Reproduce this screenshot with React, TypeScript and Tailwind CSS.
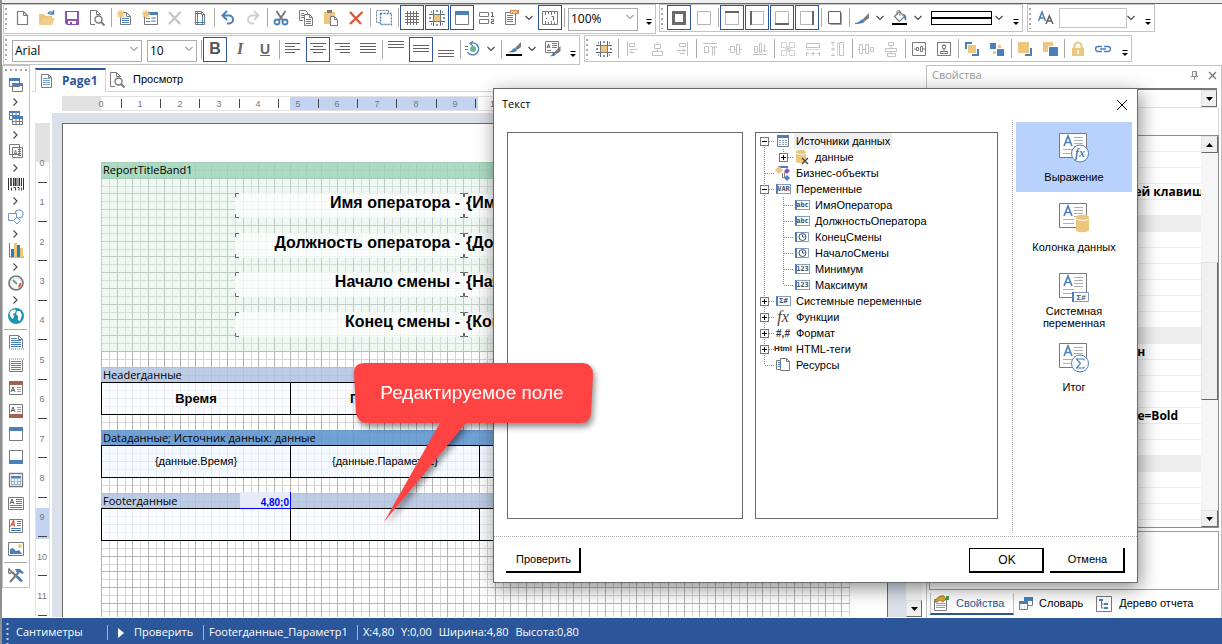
import type { ReactNode } from "react";

const GRAY = "#7a7a7a";
const DARK = "#626262";
const LIGHT = "#c2c2c2";
const BLUE = "#4a7fba";
const SAND = "#eec77f";

type Draw = { children?: ReactNode; w?: number; h?: number };

function Svg({ children, w = 16, h = 16 }: Draw) {
  return (
    <svg
      width={w}
      height={h}
      viewBox={`0 0 ${w} ${h}`}
      fill="none"
      className="shrink-0"
      aria-hidden="true"
    >
      {children}
    </svg>
  );
}

/* ---------- shared icon parts ---------- */

function Lines({ x1, x2, ys, color = BLUE }: { x1: number; x2: number; ys: number[]; color?: string }) {
  return <path d={ys.map((y) => `M${x1} ${y + 0.5}H${x2}`).join("")} stroke={color} />;
}

function Chevron() {
  return (
    <Svg w={8} h={6}>
      <path d="M0.5 1l3.5 3.5L7.5 1" stroke="#444" strokeWidth="1.1" />
    </Svg>
  );
}

const icons = {
  newFile: (
    <Svg>
      <path d="M3.5 1.5h6l4 4v9h-10z" stroke={GRAY} strokeWidth="1.2" />
      <path d="M9.5 1.5v4h4" stroke={GRAY} />
    </Svg>
  ),
  open: (
    <Svg>
      <path d="M0 15V4h5l1.5 2H13v3H4z" fill={SAND} />
      <path d="M4 8h12l-3 7H0z" fill="#f0cd8b" />
      <path d="M9 4c1-2.5 3.5-2.5 5-1M14.5 0v4h-4" stroke={BLUE} strokeWidth="1.3" />
    </Svg>
  ),
  save: (
    <Svg>
      <path d="M1 1h14v14H3l-2-2z" fill="#8a54b5" />
      <path d="M3 2h10v7H3z" fill="#fff" />
      <path d="M4 11h8v3H4z" fill="#fff" />
      <path d="M6 12h2v2H6z" fill="#8a54b5" />
    </Svg>
  ),
  preview: (
    <Svg>
      <path d="M6 14.5H1.5v-14h6l4 4V5M7.5 0.5v4h4" stroke={GRAY} />
      <circle cx="9.5" cy="9.5" r="3.5" stroke={GRAY} strokeWidth="1.4" />
      <path d="M12 12l3.5 3.5" stroke={GRAY} strokeWidth="2" />
    </Svg>
  ),
  newPage: (
    <Svg>
      <path d="M3.5 2.5h6l4 4v8h-10zM9.5 2.5v4h4" stroke={GRAY} />
      <Lines x1={5} x2={12} ys={[8, 10, 12]} />
      <path d="M4 0v8M0 4h8M1 1l6 6M7 1l-6 6" stroke={SAND} strokeWidth="1.5" />
    </Svg>
  ),
  newForm: (
    <Svg>
      <path d="M2.5 3.5h13v11h-13z" stroke={GRAY} />
      <path d="M2 2h14v3H2z" fill={BLUE} />
      <Lines x1={4} x2={8} ys={[8, 11]} color={GRAY} />
      <path d="M9.5 7.5h4v1h-4zM9.5 10.5h4v1h-4z" stroke="#9bb6d8" />
      <path d="M4 0v8M0 4h8M1 1l6 6M7 1l-6 6" stroke={SAND} strokeWidth="1.5" />
    </Svg>
  ),
  crossGray: (
    <Svg>
      <path d="M2 2l11 12M13.5 2L2 14" stroke="#c6c6c6" strokeWidth="2.4" />
    </Svg>
  ),
  crossRed: (
    <Svg>
      <path d="M2 2l11 12M14.5 2L2 14" stroke="#d9593a" strokeWidth="2.4" />
    </Svg>
  ),
  pageSetup: (
    <Svg>
      <path d="M3.5 1.5h6l3 3v10h-9zM9.5 1.5v3h3" stroke={GRAY} />
      <path d="M5.5 1v14M10.5 5v10M3 12.5h10M3 3.5h6" stroke={BLUE} />
    </Svg>
  ),
  undo: (
    <Svg>
      <path d="M3 5.5h6a4 4 0 0 1 0 8H7" stroke={BLUE} strokeWidth="2" />
      <path d="M7 1L2.5 5.5 7 10" stroke={BLUE} strokeWidth="2" />
    </Svg>
  ),
  redo: (
    <Svg>
      <path d="M13 5.5H7a4 4 0 0 0 0 8h2" stroke="#cfcfcf" strokeWidth="1.8" />
      <path d="M9 1l4.5 4.5L9 10" stroke="#cfcfcf" strokeWidth="1.8" />
    </Svg>
  ),
  cut: (
    <Svg>
      <path d="M3.5 1l6 9M12.5 1l-6 9" stroke={GRAY} strokeWidth="2" />
      <circle cx="4" cy="12" r="2.5" stroke={BLUE} strokeWidth="1.8" />
      <circle cx="12" cy="12" r="2.5" stroke={BLUE} strokeWidth="1.8" />
    </Svg>
  ),
  copy: (
    <Svg>
      <path d="M5 10.5H1.5v-10h6l2 2V4" stroke={GRAY} />
      <path d="M6.5 4.5h5l3 3v8h-8zM11.5 4.5v3h3" stroke={GRAY} fill="#fff" />
      <Lines x1={3} x2={6} ys={[3, 5, 7]} />
      <Lines x1={8} x2={13} ys={[9, 11, 13]} />
    </Svg>
  ),
  paste: (
    <Svg>
      <path d="M1 2h11v12H1z" fill={SAND} />
      <path d="M4 0h5v3H4z" fill={GRAY} />
      <path d="M7.5 6.5h4l3 3v6h-7zM11.5 6.5v3h3" stroke={GRAY} fill="#fff" />
    </Svg>
  ),
  selectAll: (
    <Svg>
      <path d="M0.5 0.5h12v12h-12z" stroke={GRAY} strokeDasharray="2 1" />
      <path d="M4.5 3.5h11v11h-11z" stroke={BLUE} strokeWidth="1.4" fill="#fff" strokeDasharray="2 1" />
    </Svg>
  ),
  grid: (
    <Svg>
      <path d="M3.5 1v14M6.5 1v14M9.5 1v14M12.5 1v14M1 3.5h14M1 6.5h14M1 9.5h14M1 12.5h14" stroke="#6e6e6e" />
    </Svg>
  ),
  snap: (
    <Svg>
      <path d="M4.5 0v16M11.5 0v16M0 4.5h16M0 11.5h16" stroke={DARK} />
      <path d="M7 1h2M7 15h2M1 7v2M15 7v2M2 2h1M13 2h1M2 14h1M13 14h1" stroke={BLUE} strokeWidth="1.6" />
      <path d="M4.5 4.5h7v7h-7z" fill={SAND} stroke={GRAY} />
    </Svg>
  ),
  formTop: (
    <Svg>
      <path d="M1.5 1.5h13v13h-13z" stroke={GRAY} />
      <path d="M1 1h14v4H1z" fill={BLUE} />
    </Svg>
  ),
  formBottom: (
    <Svg>
      <path d="M1.5 1.5h13v13h-13z" stroke={GRAY} />
      <path d="M1 11h14v4H1z" fill={BLUE} />
    </Svg>
  ),
  order: (
    <Svg>
      <path d="M0.5 2.5h9v4h-9zM0.5 9.5h9v4h-9z" stroke={GRAY} />
      <path d="M12 2.5h1.5v4M12 6.5h3M12 9.5h2.5v2h-2v2H15" stroke={DARK} />
    </Svg>
  ),
  report: (
    <Svg>
      <path d="M2.5 2.5h10v12h-10z" stroke={GRAY} />
      <path d="M7 0h9v4H7z" fill="#e58a45" />
      <path d="M8 3l1.5-2L11 3l1.5-2L14 3" stroke="#fff" />
      <Lines x1={4} x2={10} ys={[5, 7, 9, 11]} />
    </Svg>
  ),
  rulerToggle: (
    <Svg>
      <path d="M0.5 1.5h15v13h-15z" stroke={GRAY} />
      <path d="M3.5 2v3M6.5 2v2M9.5 2v3M12.5 2v2M3.5 14v-3M6.5 14v-2M9.5 14v-3M12.5 14v-2" stroke={GRAY} />
      <path d="M9.5 6.5h2v4M4 8.5h1" stroke={DARK} />
    </Svg>
  ),
  left: (
    <Svg>
      <Lines x1={0} x2={15} ys={[2, 8]} color={DARK} />
      <Lines x1={0} x2={10} ys={[5, 11]} color={DARK} />
    </Svg>
  ),
  center: (
    <Svg>
      <Lines x1={0} x2={16} ys={[2, 8]} color={DARK} />
      <Lines x1={3} x2={13} ys={[5, 11]} color={DARK} />
    </Svg>
  ),
  right: (
    <Svg>
      <Lines x1={0} x2={15} ys={[2, 8]} color={DARK} />
      <Lines x1={5} x2={15} ys={[5, 11]} color={DARK} />
    </Svg>
  ),
  justify: (
    <Svg>
      <Lines x1={0} x2={16} ys={[2, 5, 8, 11]} color={DARK} />
    </Svg>
  ),
  vTop: (
    <Svg>
      <Lines x1={0} x2={16} ys={[0, 3, 6]} color={DARK} />
    </Svg>
  ),
  vMiddle: (
    <Svg>
      <Lines x1={0} x2={16} ys={[4, 7, 10]} color={DARK} />
    </Svg>
  ),
  vBottom: (
    <Svg>
      <Lines x1={0} x2={16} ys={[9, 12, 15]} color={DARK} />
    </Svg>
  ),
  rotate: (
    <Svg>
      <path d="M5 2.5A6 6 0 1 1 2.5 11" stroke={BLUE} strokeWidth="1.4" />
      <path d="M8 0L5 2.5 8 5" stroke={BLUE} strokeWidth="1.3" />
      <path d="M0 5.5h3M0 8.5h3" stroke={GRAY} />
      <circle cx="8" cy="8" r="3" fill="#6db592" />
    </Svg>
  ),
  pen: (
    <Svg>
      <path d="M15 1v5l-4 3-2-2z" fill={GRAY} />
      <path d="M9 7l2 2c-1 2-4 3-9 2 3 0 4-3 7-4z" fill={BLUE} />
      <path d="M0 13h16v2H0z" fill="#000" />
    </Svg>
  ),
  brush: (
    <Svg>
      <path d="M15 3v5l-4 3-2-2z" fill={GRAY} />
      <path d="M9 9l2 2c-1 2-4 3-10 3v-1c4 0 5-3 8-4z" fill={BLUE} />
    </Svg>
  ),
  styles: (
    <Svg>
      <path d="M0.5 0.5h13v11h-13z" stroke={GRAY} fill="#fff" />
      <path d="M2 7l1.5-4L5 7M2.5 6h2" stroke={DARK} />
      <Lines x1={7} x2={12} ys={[2, 4, 6]} color={GRAY} />
      <Lines x1={2} x2={6} ys={[9]} color={GRAY} />
      <path d="M15.5 5v5l-4 3-2-2z" fill={GRAY} />
      <path d="M9 11l2 2c-1 2-3 2.5-6 2 2 0 2-3 4-4z" fill={BLUE} />
    </Svg>
  ),
  borderAll: (
    <Svg>
      <path d="M2.5 2.5h11v11h-11z" stroke="#6a6a6a" strokeWidth="3" />
    </Svg>
  ),
  borderNone: (
    <Svg>
      <path d="M1.5 1.5h13v13h-13z" stroke="#b5b5b5" />
    </Svg>
  ),
  borderTop: (
    <Svg>
      <path d="M1.5 1.5h13v13h-13z" stroke="#b5b5b5" />
      <path d="M1 2h14" stroke="#666" strokeWidth="2" />
    </Svg>
  ),
  borderLeft: (
    <Svg>
      <path d="M1.5 1.5h13v13h-13z" stroke="#b5b5b5" />
      <path d="M2 1v14" stroke="#666" strokeWidth="2" />
    </Svg>
  ),
  borderBottom: (
    <Svg>
      <path d="M1.5 1.5h13v13h-13z" stroke="#b5b5b5" />
      <path d="M1 14h14" stroke="#666" strokeWidth="2" />
    </Svg>
  ),
  borderRight: (
    <Svg>
      <path d="M1.5 1.5h13v13h-13z" stroke="#b5b5b5" />
      <path d="M14 1v14" stroke="#666" strokeWidth="2" />
    </Svg>
  ),
  shadow: (
    <Svg>
      <path d="M3 3h12v12H3z" fill="#a5a5a5" />
      <path d="M1.5 1.5h12v12h-12z" stroke={DARK} fill="#fff" />
    </Svg>
  ),
  bucket: (
    <Svg>
      <path d="M2.5 6.5l5-5 5 5-5 5z" stroke={GRAY} strokeWidth="1.2" />
      <path d="M5 5V1.5C5 0 8 0 8 1.5V6" stroke={GRAY} />
      <path d="M11 4c3 0 4 3 3 7-1-1-2-2-2-5z" fill={BLUE} />
      <path d="M0 13h15v2H0z" fill="#000" />
    </Svg>
  ),
  fontSize: (
    <Svg>
      <path d="M0.5 11L4 2l3.5 9M1.8 8h4.5" stroke={BLUE} strokeWidth="1.5" />
      <path d="M8 14l3.3-8 3.7 8M9.2 11h4.5" stroke={DARK} strokeWidth="1.6" />
    </Svg>
  ),
  alLeft: (
    <Svg>
      <path d="M3.5 1v14M5.5 2.5h5v3h-5zM5.5 8.5h8M5.5 11.5h5M8 8.5l-2 2 2 2" stroke={LIGHT} />
    </Svg>
  ),
  alCenter: (
    <Svg>
      <path d="M8.5 1v2M5.5 3.5h6v4h-6zM8.5 8v2M3.5 10.5h10v4h-10z" stroke={LIGHT} />
    </Svg>
  ),
  alRight: (
    <Svg>
      <path d="M13.5 1v14M5.5 2.5h6v3h-6zM3 9.5h9M6 12.5h5M9 7.5l2 2-2 2" stroke={LIGHT} />
    </Svg>
  ),
  alTop: (
    <Svg>
      <path d="M1 2.5h14M2.5 5.5h4v6h-4zM8.5 5.5h2v9M12.5 14V5M11 7l2-2 2 2" stroke={LIGHT} />
    </Svg>
  ),
  alMiddle: (
    <Svg>
      <path d="M1 8.5h2M3.5 5.5h4v6h-4zM8 8.5h2M9.5 3.5h3v10h-3zM13 8.5h2" stroke={LIGHT} />
    </Svg>
  ),
  alBottom: (
    <Svg>
      <path d="M1 13.5h14M2.5 5.5h3v6h-3zM7.5 2.5h2v9h-2zM12.5 3v8M11 9l2 2 2-2" stroke={LIGHT} />
    </Svg>
  ),
  sameSize: (
    <Svg>
      <path d="M1.5 1.5h5v5h-5zM9.5 1.5h5v5h-5zM1.5 9.5h5v5h-5zM9.5 9.5h5v5h-5z" stroke={LIGHT} strokeDasharray="2 1" />
      <path d="M8 5v6M5 8h6" stroke={LIGHT} />
    </Svg>
  ),
  sameWidth: (
    <Svg>
      <path d="M1.5 2.5h13v4h-13z" stroke={LIGHT} />
      <path d="M1.5 8.5h13" stroke={LIGHT} strokeDasharray="2 1" />
      <path d="M1 12.5h3M6 12.5h4M12 12.5h3M1.5 11v4M8 11v4M14.5 11v4" stroke={LIGHT} />
    </Svg>
  ),
  sameHeight: (
    <Svg>
      <path d="M9.5 1.5h4v13h-4z" stroke={LIGHT} />
      <path d="M7.5 1.5v13" stroke={LIGHT} strokeDasharray="2 1" />
      <path d="M1 1.5h4M1 8h4M1 14.5h4M3 2v3M3 7v3M3 12v3" stroke={LIGHT} />
    </Svg>
  ),
  spaceH: (
    <Svg>
      <path d="M0 8.5h1M1.5 3.5h3v9h-3zM5 8.5h2M7.5 3.5h3v9h-3zM12.5 6.5h3v4h-3z" stroke={LIGHT} />
    </Svg>
  ),
  spaceV: (
    <Svg>
      <path d="M5.5 1.5h5v3h-5zM8 5v2M2.5 7.5h11v3h-11zM8 11v1M4.5 12.5h8v3h-8z" stroke={LIGHT} />
    </Svg>
  ),
  centerH: (
    <Svg>
      <path d="M1.5 1.5h13v13h-13zM3 8h2M5.5 6.5h2v3h-2zM9.5 5.5h2v5h-2zM12 8h2" stroke={GRAY} />
    </Svg>
  ),
  centerV: (
    <Svg>
      <path d="M1.5 1.5h13v13h-13zM8 3v1M6.5 4.5h3v3h-3zM8 8v2M4.5 10.5h7v2h-7z" stroke={GRAY} />
    </Svg>
  ),
  toFront: (
    <Svg>
      <path d="M1 1h7v2H3v5H1zM15 15H8v-2h5V8h2z" fill={BLUE} />
      <path d="M4 4h8v8H4z" fill={SAND} />
    </Svg>
  ),
  toBack: (
    <Svg>
      <path d="M1 2h6v6H1zM8 8h7v7H8z" fill={BLUE} />
      <path d="M9 4h3v3H9zM4 10h3v3H4z" fill={SAND} />
    </Svg>
  ),
  forward: (
    <Svg>
      <path d="M15 15H8v-2h5V7h2z" fill={BLUE} />
      <path d="M1 1h11v11H1z" fill={SAND} />
    </Svg>
  ),
  backward: (
    <Svg>
      <path d="M1 1h10v4H6v6H1z" fill={SAND} />
      <path d="M7 6h9v9H7z" fill={BLUE} />
    </Svg>
  ),
  lock: (
    <Svg>
      <path d="M2 7h12v8H2z" fill={SAND} />
      <path d="M4.5 7V5a3.5 3.5 0 0 1 7 0v2" stroke={SAND} strokeWidth="2" />
      <path d="M8 9v4" stroke="#fff" strokeWidth="1.5" />
    </Svg>
  ),
  link: (
    <Svg>
      <path d="M7 5.5H3a2.5 2.5 0 0 0 0 5h4M9 5.5h4a2.5 2.5 0 0 1 0 5H9M5 8h6" stroke={BLUE} strokeWidth="1.5" />
    </Svg>
  ),
  // component palette
  bands: (
    <Svg>
      <path d="M1.5 1.5h10v8h-10zM4.5 6.5h10v8h-10z" stroke={GRAY} fill="#fff" />
      <path d="M1 1h11v3H1zM4 6h11v3H4z" fill={BLUE} />
    </Svg>
  ),
  crossBands: (
    <Svg>
      <path d="M1.5 1.5h10v8h-10z" stroke={GRAY} fill="#fff" />
      <path d="M1 5.5h10M4.5 3v6M8 3v6" stroke={GRAY} />
      <path d="M4.5 6.5h10v8h-10z" stroke={GRAY} fill="#fff" />
      <path d="M5 11.5h10M8 9v6M11.5 9v6" stroke={GRAY} />
      <path d="M1 1h11v2H1zM4 6h11v3H4z" fill={BLUE} />
    </Svg>
  ),
  components: (
    <Svg>
      <path d="M1.5 1.5h10v10h-10zM4.5 4.5h10v10h-10z" stroke={GRAY} fill="#fff" />
      <path d="M6 12l1.5-5L9 12M6.5 10.5h2" stroke={GRAY} />
      <Lines x1={10} x2={13} ys={[6, 8, 10, 12]} />
    </Svg>
  ),
  barcode: (
    <Svg>
      <path d="M0.5 2v12M15.5 2v12M5.5 2v8M9 2v8M13.5 2v8" stroke="#333" />
      <path d="M3 2v8M7.3 2v8M11.3 2v8" stroke="#333" strokeWidth="1.6" />
      <path d="M3.5 11.500v3M5.5 11.5h2v3M9.500 11.500H11v3M13.500 11.500v3" stroke="#444" />
    </Svg>
  ),
  shapes: (
    <Svg>
      <circle cx="11" cy="5" r="4" stroke="#6f96c8" strokeWidth="1.2" />
      <path d="M0.5 4.5h8v7h-8z" stroke="#6f96c8" fill="#fff" />
      <path d="M9 8l3.5 3.5L9 15l-3.5-3.5z" stroke="#6f96c8" fill="#fff" />
    </Svg>
  ),
  chart: (
    <Svg>
      <path d="M1.5 1v14h15" stroke={GRAY} />
      <path d="M3 7h3v8H3zM9 3h3v12H9z" fill="#1d83bb" />
      <path d="M6 1h3v14H6zM12 6h3v9h-3z" fill="#f4c273" />
    </Svg>
  ),
  gauge: (
    <Svg>
      <circle cx="8" cy="8" r="7" stroke={GRAY} strokeWidth="1.7" />
      <circle cx="8" cy="8" r="5" stroke="#bbb" strokeDasharray="1 1.5" />
      <path d="M12.5 8a5 5 0 0 1-2 4" stroke="#d9593a" strokeWidth="2" />
      <path d="M9 9L5 5" stroke="#5ba583" strokeWidth="1.8" />
    </Svg>
  ),
  map: (
    <Svg>
      <circle cx="8" cy="8" r="8" fill="#1e93ad" />
      <path d="M2 4c2-3 5-3 6-2l-1 3-2 1 1 2-1 3c-2-1-4-4-3-7zM9 3l3 0 2 4-2 6-2-1V8L8 6z" fill="#fff" />
    </Svg>
  ),
  reportTitle: (
    <Svg>
      <path d="M1.5 14V1.500h9l4 4V14M10.5 1.500v4h4" stroke={GRAY} />
      <path d="M1 15h15" stroke={GRAY} strokeDasharray="1 1" />
      <Lines x1={3} x2={9} ys={[4]} />
      <Lines x1={3} x2={13} ys={[6, 8, 10, 12]} />
    </Svg>
  ),
  reportSummary: (
    <Svg>
      <path d="M1.5 3v11.5h13V3" stroke={GRAY} />
      <path d="M1 2h15" stroke={GRAY} strokeDasharray="1 1" />
      <Lines x1={3} x2={13} ys={[4, 6, 8, 10, 12]} />
    </Svg>
  ),
  pageHeader: (
    <Svg>
      <path d="M1.5 1.5h13v13h-13z" stroke={GRAY} />
      <path d="M1 1h14v4H1z" fill="#a3614f" />
      <path d="M3 12l2-5 2 5M3.5 10.5h3" stroke={DARK} />
      <Lines x1={9} x2={13} ys={[7, 9, 11]} color="#cf9184" />
    </Svg>
  ),
  pageFooter: (
    <Svg>
      <path d="M1.5 1.5h13v13h-13z" stroke={GRAY} />
      <path d="M1 11h14v4H1z" fill="#a3614f" />
      <path d="M3 9l2-5 2 5M3.5 7.5h3" stroke={DARK} />
      <Lines x1={9} x2={13} ys={[4, 6, 8]} color="#cf9184" />
    </Svg>
  ),
  dataBand: (
    <Svg>
      <path d="M1.5 1.5h13v13h-13z" stroke={GRAY} strokeWidth="1.3" />
      <path d="M3 4h10v2H3z" fill={BLUE} />
      <path d="M3.5 6.5h9v6h-9zM3 9.5h10M6.5 7v6M9.5 7v6" stroke="#9fb4d0" />
    </Svg>
  ),
  text: (
    <Svg>
      <path d="M0.5 2.5h15v12h-15z" stroke={GRAY} />
      <path d="M2 9l2-5 2 5M2.5 7.5h3" stroke={DARK} />
      <Lines x1={8} x2={14} ys={[4, 6, 8]} />
      <Lines x1={2} x2={14} ys={[10, 12]} />
    </Svg>
  ),
  richText: (
    <Svg>
      <path d="M1.5 1.5h13v13h-13z" stroke={GRAY} />
      <path d="M2.5 8.5l3-6 1 6M3.5 6.5h3" stroke="#d9593a" strokeWidth="1.3" />
      <Lines x1={9} x2={13} ys={[3, 5, 7]} />
      <Lines x1={3} x2={13} ys={[10, 12]} />
    </Svg>
  ),
  image: (
    <Svg>
      <path d="M0.5 1.5h15v13h-15z" stroke={GRAY} />
      <circle cx="12" cy="5" r="2" fill={SAND} />
      <path d="M2 13V8l3-1 3 3 3-1 3 4z" fill={BLUE} />
    </Svg>
  ),
  tools: (
    <Svg>
      <path d="M2 15l9-10" stroke={GRAY} strokeWidth="2" />
      <path d="M7 2h5l4 4-2 1-3-2-2 1z" fill={BLUE} />
      <path d="M4 5l9 9" stroke={GRAY} strokeWidth="2.4" />
      <path d="M9 9l5 5.5" stroke={BLUE} strokeWidth="2.4" />
      <path d="M1 2l3 3-2 1.5L0 5z" stroke={GRAY} strokeWidth="1.5" />
    </Svg>
  ),
  // tabs
  pageTab: (
    <Svg>
      <path d="M1.5 1.5h7l3 3v10h-10zM8.5 1.5v3h3" stroke={GRAY} />
      <Lines x1={3} x2={10} ys={[5, 7, 9, 11]} color="#7da4cf" />
    </Svg>
  ),
  properties: (
    <Svg>
      <path d="M1.5 4.5h12v11h-12z" stroke={GRAY} fill="#fff" />
      <Lines x1={3} x2={12} ys={[8, 10, 12]} color="#7da4cf" />
      <path d="M2 7c1-4 5-7 9-6l2 3-3 3-3-2-3 2z" fill="#dba63c" stroke="#8d6b26" strokeWidth="0.8" />
      <path d="M13 1h3v4h-3z" fill="#4aa04f" />
    </Svg>
  ),
  dictionary: (
    <Svg>
      <path d="M6.5 2.5h8v7h-8z" stroke={GRAY} fill="#fff" />
      <path d="M1.5 6.5h8v7h-8z" stroke={GRAY} fill="#fff" />
      <path d="M6 1h9v4H6zM1 5h9v3H1z" fill={BLUE} />
      <path d="M3 10h1M6 10h1M3 12h1M6 12h1" stroke={LIGHT} />
    </Svg>
  ),
  reportTree: (
    <Svg>
      <path d="M0.5 0.5h15v15h-15z" stroke={GRAY} />
      <path d="M3 3h4v2H3zM8 7h4v2H8zM8 11h4v2H8z" fill={BLUE} />
      <path d="M5.5 5v7h2M5.5 8h2" stroke={BLUE} />
    </Svg>
  ),
  // tree
  table: (
    <Svg>
      <path d="M2.5 2.5h11v11h-11z" stroke={GRAY} />
      <path d="M2 2h12v3H2z" fill={BLUE} />
      <path d="M4 7.5h8M4 9.5h8M4 11.5h8" stroke="#8aa4c8" strokeDasharray="2 1" />
    </Svg>
  ),
  dbOff: (
    <Svg>
      <path d="M2 3c0-3 10-3 10 0v9c0 3-10 3-10 0z" fill={SAND} />
      <path d="M2 4c1 2 9 2 10 0" stroke="#fff" />
      <path d="M8 9l6 6M14 9l-6 6" stroke="#444" strokeWidth="1.4" />
    </Svg>
  ),
  business: (
    <Svg>
      <path d="M3 2h10" stroke={BLUE} strokeWidth="2" />
      <path d="M7.5 8v4.5h3M9.5 12V7.5h3" stroke={GRAY} />
      <path d="M4 1l4 4-4 4-4-4z" fill={SAND} />
      <path d="M12 3l3 3-3 3-3-3z" fill="#8a54b5" />
      <path d="M12 10l3 3-3 3-3-3z" fill={BLUE} />
    </Svg>
  ),
  clock: (
    <Svg>
      <path d="M1.5 3.5h13v9h-13z" stroke="#7f9cc5" />
      <path d="M1 3h2v10H1z" fill={BLUE} />
      <circle cx="8.5" cy="8" r="3.5" stroke="#44546a" />
      <path d="M8.5 5.5V8h2" stroke="#44546a" />
    </Svg>
  ),
  resources: (
    <Svg>
      <path d="M5.5 12.5h-4v-9h4M5.5 1.5h6l3 3v9h-9zM11.5 1.5v3h3" stroke={GRAY} />
      <Lines x1={3} x2={6} ys={[5, 7, 9]} />
    </Svg>
  ),
};

type IconName = keyof typeof icons;

/* ---------- toolbar parts ---------- */

function ToolButton({ icon, label, active }: { icon: ReactNode; label: string; active?: boolean }) {
  return (
    <button
      type="button"
      aria-label={label}
      aria-pressed={active}
      className={
        "mr-px flex h-[25px] w-6 shrink-0 items-center justify-center " +
        (active ? "border border-[#2b579a]" : "")
      }
    >
      {icon}
    </button>
  );
}

function SplitButton({ icon, label }: { icon: IconName; label: string }) {
  return (
    <button type="button" aria-label={label} className="mr-[2px] flex h-[25px] shrink-0 items-center">
      <span className="flex w-[22px] justify-center">{icons[icon]}</span>
      <span className="flex w-[14px] justify-center">
        <Chevron />
      </span>
    </button>
  );
}

function Divider() {
  return <div className="mx-px h-[19px] w-px shrink-0 bg-[#a9a9a9]" />;
}

function Grip() {
  return (
    <Svg w={6} h={22}>
      <path d="M2 1v21" stroke="#a8a8a8" strokeWidth="2" strokeDasharray="2 3" />
    </Svg>
  );
}

function More() {
  return (
    <button type="button" aria-label="Еще" className="flex w-[12px] shrink-0 self-end justify-center pb-[5px]">
      <Svg w={6} h={6}>
        <path d="M0.5 0.5h5" stroke="#000" />
        <path d="M0 3h6L3 6z" fill="#000" />
      </Svg>
    </button>
  );
}

function Combo({ label, value, className }: { label: string; value: string; className: string }) {
  return (
    <div className={"relative shrink-0 " + className}>
      <select
        aria-label={label}
        className="h-full w-full appearance-none border border-[#ababab] bg-white pl-[2px] font-['Open_Sans',sans-serif] text-xs leading-none"
      >
        <option>{value}</option>
      </select>
      <span className="pointer-events-none absolute top-2 right-1 opacity-50">
        <Chevron />
      </span>
    </div>
  );
}

function ToolbarBox({ children, className }: { children: ReactNode; className: string }) {
  return (
    <div role="toolbar" className={"flex items-center border border-[#c3c3c3] bg-white " + className}>
      <Grip />
      {children}
    </div>
  );
}

type Item = [IconName, string, boolean?] | "|";

function Items({ items }: { items: Item[] }) {
  return items.map((item, i) =>
    item === "|" ? (
      <Divider key={i} />
    ) : (
      <ToolButton key={i} icon={icons[item[0]]} label={item[1]} active={item[2]} />
    ),
  );
}

const fileItems: Item[] = [
  ["newFile", "Новый"],
  ["open", "Открыть"],
  ["save", "Сохранить"],
  ["preview", "Предпросмотр"],
  "|",
  ["newPage", "Новая страница"],
  ["newForm", "Новая форма"],
  ["crossGray", "Удалить страницу"],
  ["pageSetup", "Параметры страницы"],
  "|",
  ["undo", "Отменить"],
  ["redo", "Вернуть"],
  "|",
  ["cut", "Вырезать"],
  ["copy", "Копировать"],
  ["paste", "Вставить"],
  ["crossRed", "Удалить"],
  "|",
  ["selectAll", "Выделить все"],
  "|",
  ["grid", "Сетка", true],
  ["snap", "Привязка", true],
  ["formTop", "Заголовки", true],
  ["order", "Порядок"],
];

const borderItems: Item[] = [
  ["borderAll", "Все границы", true],
  ["borderNone", "Без границ"],
  "|",
  ["borderTop", "Верхняя граница", true],
  ["borderLeft", "Левая граница", true],
  ["borderBottom", "Нижняя граница", true],
  ["borderRight", "Правая граница", true],
  "|",
  ["shadow", "Тень"],
  "|",
];

const alignItems: Item[] = [
  "|",
  ["left", "По левому краю"],
  ["center", "По центру", true],
  ["right", "По правому краю"],
  ["justify", "По ширине"],
  "|",
  ["vTop", "По верху"],
  ["vMiddle", "По середине", true],
  ["vBottom", "По низу"],
  "|",
];

const layoutItems: Item[] = [
  ["snap", "Выровнять по сетке"],
  "|",
  ["alLeft", "Выровнять влево"],
  ["alCenter", "Выровнять по центру"],
  ["alRight", "Выровнять вправо"],
  "|",
  ["alTop", "Выровнять вверх"],
  ["alMiddle", "Выровнять по середине"],
  ["alBottom", "Выровнять вниз"],
  "|",
  ["sameSize", "Одинаковый размер"],
  ["sameWidth", "Одинаковая ширина"],
  ["sameHeight", "Одинаковая высота"],
  "|",
  ["spaceH", "Интервал по горизонтали"],
  ["spaceV", "Интервал по вертикали"],
  "|",
  ["centerH", "Центр по горизонтали"],
  ["centerV", "Центр по вертикали"],
  "|",
  ["toFront", "На передний план"],
  ["toBack", "На задний план"],
  "|",
  ["forward", "Вперед"],
  ["backward", "Назад"],
  "|",
  ["lock", "Заблокировать"],
  ["link", "Связать"],
];

function Toolbars() {
  return (
    <div className="flex shrink-0 flex-col gap-px pl-px">
      <div className="flex h-[30px] items-start">
        <ToolbarBox className="h-[30px] pb-[3px]">
          <Items items={fileItems} />
          <SplitButton icon="report" label="Отчет" />
          <ToolButton icon={icons.rulerToggle} label="Линейки" active />
          <Divider />
          <Combo label="Масштаб" value="100%" className="mr-[5px] ml-[2px] h-[23px] w-[70px]" />
          <More />
        </ToolbarBox>
        <ToolbarBox className="ml-[3px] h-[28px] pb-px">
          <span className="w-px" />
          <Items items={borderItems} />
          <SplitButton icon="brush" label="Цвет границы" />
          <SplitButton icon="bucket" label="Заливка" />
          <button type="button" aria-label="Стиль границы" className="mr-1 ml-1 flex items-center">
            <span className="flex h-[14px] w-[61px] items-center border border-black">
              <span className="h-[2px] w-full bg-black" />
            </span>
            <span className="flex w-[14px] justify-center">
              <Chevron />
            </span>
          </button>
          <More />
        </ToolbarBox>
        <ToolbarBox className="ml-1 h-[28px] pb-px">
          <ToolButton icon={icons.fontSize} label="Стиль" />
          <input aria-label="Имя стиля" className="h-5 w-[68px] border border-[#c3c3c3]" />
          <span className="mr-[7px]">
            <Chevron />
          </span>
          <More />
        </ToolbarBox>
      </div>
      <div className="flex h-[30px] items-start">
        <ToolbarBox className="h-[30px] pb-[2px]">
          <Combo label="Шрифт" value="Arial" className="mr-[5px] ml-[2px] h-[22px] w-[130px]" />
          <Combo label="Размер" value="10" className="mr-[3px] h-[22px] w-[50px]" />
          <Divider />
          <ToolButton icon={<b className="text-base text-[#555]">B</b>} label="Полужирный" active />
          <ToolButton
            icon={<i className="font-['Liberation_Serif',serif] text-base font-bold text-[#666]">I</i>}
            label="Курсив"
          />
          <ToolButton icon={<b className="text-sm text-[#666] underline">U</b>} label="Подчеркнутый" />
          <Items items={alignItems} />
          <SplitButton icon="rotate" label="Поворот" />
          <Divider />
          <SplitButton icon="pen" label="Цвет текста" />
          <ToolButton icon={icons.styles} label="Стили" />
          <span className="w-px" />
          <More />
        </ToolbarBox>
        <ToolbarBox className="ml-1 h-[27px]">
          <span className="w-px" />
          <Items items={layoutItems} />
          <span className="w-[3px]" />
          <More />
        </ToolbarBox>
      </div>
    </div>
  );
}

/* ---------- component palette ---------- */

const groups: [IconName, string][] = [
  ["bands", "Бэнды"],
  ["crossBands", "Кросс-бэнды"],
  ["components", "Компоненты"],
  ["barcode", "Штрих-коды"],
  ["shapes", "Фигуры"],
  ["chart", "Диаграммы"],
  ["gauge", "Индикаторы"],
];

const singles: [IconName, string][] = [
  ["reportTitle", "Заголовок отчета"],
  ["reportSummary", "Итог отчета"],
  ["pageHeader", "Верхний колонтитул"],
  ["pageFooter", "Нижний колонтитул"],
  ["formTop", "Заголовок"],
  ["formBottom", "Итог группы"],
  ["dataBand", "Бэнд данных"],
  ["text", "Текстовое поле"],
  ["richText", "Форматированный текст"],
  ["image", "Изображение"],
];

function Palette() {
  return (
    <div className="flex w-[28px] shrink-0 flex-col items-stretch self-start border border-[#c3c3c3] bg-white pr-px pb-px">
      <div className="flex h-[10px] justify-center pt-[3px]">
        <Svg w={22} h={2}>
          <path d="M0 1h22" stroke="#a8a8a8" strokeWidth="2" strokeDasharray="2 3" />
        </Svg>
      </div>
      {groups.map(([icon, label]) => (
        <button key={icon} type="button" aria-label={label} className="flex flex-col items-center">
          <span className="flex h-[18px] items-center">{icons[icon]}</span>
          <span className="flex h-[15px] items-center">
            <Svg w={5} h={8}>
              <path d="M0.5 0.5L4 4 0.5 7.5" stroke="#444" strokeWidth="1.1" />
            </Svg>
          </span>
        </button>
      ))}
      <button type="button" aria-label="Карта" className="flex h-[18px] items-center justify-center">
        {icons.map}
      </button>
      <div className="mx-px mt-1 h-px bg-[#a9a9a9]" />
      {singles.map(([icon, label]) => (
        <button key={icon} type="button" aria-label={label} className="flex h-[23px] items-center justify-center">
          {icons[icon]}
        </button>
      ))}
      <div className="mx-px mt-[2px] h-px bg-[#a9a9a9]" />
      <button type="button" aria-label="Инструменты" className="flex h-[23px] items-center justify-center">
        {icons.tools}
      </button>
    </div>
  );
}

/* ---------- designer ---------- */

const CM = 39.37;
const at = (cm: number) => Math.round(cm * CM);

function HorizontalRuler() {
  return (
    <svg width="100%" height="15" className="block" aria-hidden="true">
      <rect width="100%" height="15" fill="#fff" />
      <rect width="39" height="15" fill="#e2e2e2" />
      <rect x="228" width="188" height="15" fill="#c3d4f2" />
      <path d="M0 0.5H844M0 14.5H844" stroke="#e2e2e2" />
      {Array.from({ length: 11 }, (_, i) => (
        <g key={i}>
          <text x={39 + at(i)} y="11" fontSize="9" fill="#777" textAnchor="middle" fontFamily="Liberation Sans">
            {i}
          </text>
          <path d={`M${39.5 + at(i + 0.5)} 3v9`} stroke="#444" />
        </g>
      ))}
    </svg>
  );
}

function VerticalRuler() {
  return (
    <svg width="15" height="100%" className="block" aria-hidden="true">
      <rect width="15" height="100%" fill="#fff" />
      <rect width="15" height="39" fill="#e2e2e2" />
      <rect y="385" width="15" height="31" fill="#c3d4f2" />
      <path d="M0.5 0V600M14.5 0V600" stroke="#e2e2e2" />
      {Array.from({ length: 12 }, (_, i) => (
        <g key={i}>
          <text x="7" y={43 + at(i)} fontSize="9" fill="#777" textAnchor="middle" fontFamily="Liberation Sans">
            {i}
          </text>
          <path d={`M3 ${39.5 + at(i + 0.5)}h9`} stroke="#444" />
        </g>
      ))}
    </svg>
  );
}

function GridLines() {
  const cols = Array.from({ length: 96 }, (_, i) => at(i / 5) + 0.5);
  const rows = Array.from({ length: 62 }, (_, i) => at(i / 5) + 0.5);
  const v = (odd: number) => cols.filter((_, i) => i % 2 === odd).map((x) => `M${x} 0V480`).join("");
  const h = (odd: number) => rows.filter((_, i) => i % 2 === odd).map((y) => `M0 ${y}H749`).join("");
  return (
    <svg width="749" height="480" className="block" aria-hidden="true">
      <path d={v(1) + h(1)} stroke="#d6d6d6" />
      <path d={v(0) + h(0)} stroke="#b4b4b4" />
    </svg>
  );
}

function Band({ title, className }: { title: string; className: string }) {
  return (
    <div
      className={
        "absolute left-[38px] w-[749px] pl-[2px] font-['Open_Sans',sans-serif] text-[11px] text-black " + className
      }
    >
      {title}
    </div>
  );
}

function FieldRow({ cells, className }: { cells: string[]; className: string }) {
  return (
    <div className={"absolute left-[38px] flex h-[33px] w-[749px] border border-black " + className}>
      {cells.map((cell, i) => (
        <div key={i} className="flex w-[189px] shrink-0 items-center justify-center border-r border-black">
          {cell}
        </div>
      ))}
    </div>
  );
}

function Corners({ w }: { w: number }) {
  return (
    <svg width={w} height="25" className="absolute inset-0" fill="none" aria-hidden="true">
      <path
        d={`M0.5 4V0.5H4M0.5 21v3.5H4M${w - 4} 0.5h3.5V4M${w - 4} 24.5h3.5V21`}
        stroke="#666"
      />
    </svg>
  );
}

function TitleField({ label, value, className }: { label: string; value: string; className: string }) {
  return (
    <div className={"absolute left-[172px] flex h-[25px] text-base leading-[19px] font-bold text-black " + className}>
      <div className="relative w-[229px] bg-white/75 pr-1 text-right whitespace-nowrap">
        <Corners w={229} />
        <span className="relative">{label}</span>
      </div>
      <div className="relative w-[229px] bg-white/75 whitespace-nowrap">
        <Corners w={229} />
        <span className="relative pl-[2px]">{value}</span>
      </div>
    </div>
  );
}

function ScrollButton({ down }: { down?: boolean }) {
  return (
    <button
      type="button"
      aria-label={down ? "Вниз" : "Вверх"}
      className="flex h-[17px] w-full shrink-0 items-center justify-center border border-t-[#e3e3e3] border-r-[#696969] border-b-[#696969] border-l-[#e3e3e3] bg-[#f0f0f0]"
    >
      <Svg w={7} h={4}>
        <path d={down ? "M0 0h7L3.5 4z" : "M0 4h7L3.5 0z"} fill="#000" />
      </Svg>
    </button>
  );
}

function Designer() {
  return (
    <div className="flex min-w-0 flex-1 flex-col">
      <div className="mt-[3px] ml-[2px] flex h-6 shrink-0 border-b border-[#d5d5d5] pl-[3px]" role="tablist">
        <button
          type="button"
          role="tab"
          aria-selected="true"
          className="-mb-px flex w-[71px] items-center border-x border-t-2 border-x-[#d5d5d5] border-t-[#2b579a] bg-white pl-1 font-['Open_Sans',sans-serif] text-xs font-bold text-[#2b579a]"
        >
          {icons.pageTab}
          <span className="ml-[6px]">Page1</span>
        </button>
        <button type="button" role="tab" aria-selected="false" className="ml-[3px] flex items-center text-[11px]">
          {icons.preview}
          <span className="ml-2">Просмотр</span>
        </button>
      </div>
      <div className="h-[21px] shrink-0 pt-1 pl-8">
        <HorizontalRuler />
      </div>
      <div className="flex min-h-0 flex-1 pr-1 pb-px">
        <div className="w-[22px] shrink-0 overflow-hidden pt-[10px] pl-[5px]">
          <VerticalRuler />
        </div>
        <div className="min-w-0 flex-1 overflow-hidden bg-[#dbe0ea] pt-[10px] pl-[10px]">
          <div className="relative h-full w-[826px] border border-b-0 border-[#6b6b6b] bg-white">
            <div className="absolute top-[38px] left-[38px]">
              <GridLines />
            </div>
            <Band title="ReportTitleBand1" className="top-[38px] h-[17px] bg-[#9ed4b7]/85 leading-[16px]" />
            <div className="absolute top-[55px] left-[38px] h-[173px] w-[749px] border-b border-[#9ecbb2] bg-[#d4ecdf]/40" />
            <TitleField className="top-[69px]" label="Имя оператора -" value="{ИмяОператора}" />
            <TitleField className="top-[109px]" label="Должность оператора -" value="{ДолжностьОператора}" />
            <TitleField className="top-[148px]" label="Начало смены -" value="{НачалоСмены}" />
            <TitleField className="top-[188px]" label="Конец смены -" value="{КонецСмены}" />
            <Band title="Headerданные" className="top-[243px] h-[15px] bg-[#b0c3e0]/85 leading-[15px]" />
            <FieldRow
              className="top-[258px] bg-[#f8fbff]/75 text-[13px] font-bold"
              cells={["Время", "Параметр1", "Параметр2"]}
            />
            <Band
              title="Dataданные; Источник данных: данные"
              className="top-[306px] h-[15px] bg-[#6096cf]/90 leading-[15px]"
            />
            <FieldRow
              className="top-[321px] bg-[#f0f8ff]/75 text-[11px]"
              cells={["{данные.Время}", "{данные.Параметр1}", "{данные.Параметр2}"]}
            />
            <Band title="Footerданные" className="top-[369px] h-[15px] bg-[#b0c3e0]/85 leading-[15px]" />
            <FieldRow className="top-[384px] bg-[#f8fbff]/75" cells={["", "", ""]} />
            <div className="absolute top-[368px] left-[177px] h-[17px] w-[51px] border-r border-b border-[#0000ff] bg-[#e6ebf5] pt-[3px] pr-px text-right text-[10px] leading-[15px] font-bold text-[#0000ff]">
              4,80;0
            </div>
          </div>
        </div>
        <div className="flex w-4 shrink-0 flex-col justify-between bg-[#f4f4f4]">
          <ScrollButton />
          <ScrollButton down />
        </div>
      </div>
    </div>
  );
}

/* ---------- properties ---------- */

const propertyRows: { text?: string; group?: boolean; pad?: string }[] = Array.from({ length: 24 }, (_, i) => {
  if (i === 3) return { text: "Сочетание горячей клавиши", pad: "pl-[98px]" };
  if (i === 13) return { text: "Да, включен", pad: "pl-[136px]" };
  if (i === 17) return { text: "Arial; 10; Style=Bold", pad: "pl-[130px]" };
  return { group: i === 5 || i === 12 || i === 20 };
});

function Properties() {
  return (
    <aside className="flex w-[296px] shrink-0 flex-col border-x border-t border-[#c3c3c3] bg-white">
      <div className="mb-[3px] flex h-[19px] shrink-0 items-center justify-between pr-1 pl-[5px] font-['Open_Sans',sans-serif] text-[11px] text-[#9b9b9b]">
        <span>Свойства</span>
        <div className="flex gap-[9px]">
          <button type="button" aria-label="Закрепить">
            <Svg w={9} h={9}>
              <path d="M1 5.5h7M4.5 6v3M2.5 0.5h4v5h-4z" stroke="#8a8a8a" />
              <path d="M6 0v6" stroke="#8a8a8a" />
            </Svg>
          </button>
          <button type="button" aria-label="Закрыть панель">
            <Svg w={9} h={9}>
              <path d="M1 1l7 7M8 1L1 8" stroke="#777" strokeWidth="1.3" />
            </Svg>
          </button>
        </div>
      </div>
      <div className="mr-1 ml-[2px] flex h-[20px] shrink-0 justify-end border-t-2 border-b border-t-[#777] border-b-[#e3e3e3]">
        <div className="w-4">
          <ScrollButton down />
        </div>
      </div>
      <div className="mx-[2px] h-[27px] shrink-0 border-r border-[#d5d5d5]" />
      <div className="mx-[2px] flex min-h-0 flex-1 overflow-hidden border border-[#8d8d8d]">
        <div className="min-w-0 flex-1">
          {propertyRows.map((row, i) => (
            <div
              key={i}
              className={
                "h-4 overflow-hidden border-b border-[#eeeeee] font-['Open_Sans',sans-serif] text-xs leading-4 font-bold whitespace-nowrap " +
                (row.group ? "bg-[#eeeeee] " : "") +
                (row.pad ?? "")
              }
            >
              {row.text}
            </div>
          ))}
        </div>
        <div className="flex w-[17px] shrink-0 flex-col bg-[#f6f6f6]">
          <ScrollButton />
          <div className="h-[109px]" />
          <div className="h-[138px] border border-t-[#e3e3e3] border-r-[#696969] border-b-[#696969] border-l-[#e3e3e3] bg-[#f0f0f0]" />
          <div className="flex-1" />
          <ScrollButton down />
        </div>
      </div>
      <div className="mx-[2px] mt-[3px] h-[59px] shrink-0 border border-[#9d9d9d]" />
      <div
        role="tablist"
        className="flex h-[28px] shrink-0 items-start pt-[3px] pl-[3px] text-[11px] whitespace-nowrap"
      >
        <button
          type="button"
          role="tab"
          aria-selected="true"
          className="flex h-[22px] w-[84px] items-center border-x border-b-2 border-x-[#c3c3c3] border-b-[#2b579a] pl-[2px] text-[#2b579a]"
        >
          {icons.properties}
          <span className="ml-[7px]">Свойства</span>
        </button>
        <button type="button" role="tab" aria-selected="false" className="ml-1 flex h-[21px] items-center">
          {icons.dictionary}
          <span className="ml-[5px]">Словарь</span>
        </button>
        <button type="button" role="tab" aria-selected="false" className="ml-[13px] flex h-[21px] items-center">
          {icons.reportTree}
          <span className="ml-[7px]">Дерево отчета</span>
        </button>
      </div>
    </aside>
  );
}

/* ---------- text editor dialog ---------- */

function Tag({ text }: { text: string }) {
  return (
    <span className="flex h-[10px] w-[15px] items-center justify-center overflow-hidden border border-l-2 border-[#7f9cc5] border-l-[#4a7fba] bg-white font-['DejaVu_Sans_Mono',monospace] text-[7px] leading-none font-bold text-[#44546a]">
      {text}
    </span>
  );
}

type Node = {
  label: string;
  icon: ReactNode;
  level: 0 | 1;
  state?: "open" | "closed";
  last?: boolean;
  selected?: boolean;
};

const tree: Node[] = [
  { label: "Источники данных", icon: icons.table, level: 0, state: "open", selected: true },
  { label: "данные", icon: icons.dbOff, level: 1, state: "closed", last: true },
  { label: "Бизнес-объекты", icon: icons.business, level: 0 },
  { label: "Переменные", icon: <Tag text="VAR" />, level: 0, state: "open" },
  { label: "ИмяОператора", icon: <Tag text="abc" />, level: 1 },
  { label: "ДолжностьОператора", icon: <Tag text="abc" />, level: 1 },
  { label: "КонецСмены", icon: icons.clock, level: 1 },
  { label: "НачалоСмены", icon: icons.clock, level: 1 },
  { label: "Минимум", icon: <Tag text="123" />, level: 1 },
  { label: "Максимум", icon: <Tag text="123" />, level: 1, last: true },
  { label: "Системные переменные", icon: <Tag text="Σ#" />, level: 0, state: "closed" },
  {
    label: "Функции",
    icon: <i className="font-['Liberation_Serif',serif] text-base leading-none text-[#444]">fx</i>,
    level: 0,
    state: "closed",
  },
  { label: "Формат", icon: <b className="text-[10px] text-[#333]">#,#</b>, level: 0, state: "closed" },
  {
    label: "HTML-теги",
    icon: <b className="text-[8px] text-[#222]">Html</b>,
    level: 0,
    state: "closed",
  },
  { label: "Ресурсы", icon: icons.resources, level: 0, last: true },
];

function Branch({ node, first }: { node: Node; first?: boolean }) {
  return (
    <Svg w={19}>
      <path
        d={`M8.5 ${first ? 8 : 0}V${node.last ? 8 : 16}M9 8.5H19`}
        stroke="#888"
        strokeDasharray="1 1"
      />
      {node.state && (
        <>
          <rect x="4.5" y="4.5" width="8" height="8" fill="#fff" stroke="#777" />
          <path d={node.state === "open" ? "M6 8.5h5" : "M6 8.5h5M8.5 6v5"} stroke="#000" />
        </>
      )}
    </Svg>
  );
}

function TreeRow({ node, first }: { node: Node; first: boolean }) {
  return (
    <li role="treeitem" aria-selected={!!node.selected} className="flex h-4 items-center">
      {node.level === 1 && (
        <Svg w={19}>
          <path d="M8.5 0V16" stroke="#888" strokeDasharray="1 1" />
        </Svg>
      )}
      <Branch node={node} first={first} />
      <span className="flex w-4 shrink-0 justify-center">{node.icon}</span>
      <span className={"ml-[3px] px-[2px] leading-4 whitespace-nowrap " + (node.selected ? "bg-[#efefef]" : "")}>
        {node.label}
      </span>
    </li>
  );
}

function PaperIcon({ children }: { children: ReactNode }) {
  return (
    <Svg w={32} h={32}>
      <path d="M1.5 2.5h27v24h-27z" stroke={GRAY} fill="#fff" />
      <path d="M6 15l4-10 4 10M7.5 11.5h5" stroke={BLUE} strokeWidth="1.6" />
      <path d="M16 6.5h9M16 9.5h9M16 12.5h9M16 15.5h9M5 18.5h11M5 22.5h11" stroke="#b0b0b0" />
      {children}
    </Svg>
  );
}

const modes: { label: string; icon: ReactNode; active?: boolean }[] = [
  {
    label: "Выражение",
    active: true,
    icon: (
      <PaperIcon>
        <circle cx="22" cy="22.5" r="8.5" fill="#fff" stroke={BLUE} />
        <text
          x="22"
          y="26"
          fontSize="12"
          fontWeight="bold"
          textAnchor="middle"
          fontStyle="italic"
          fontFamily="Liberation Serif"
          fill={BLUE}
        >
          fx
        </text>
      </PaperIcon>
    ),
  },
  {
    label: "Колонка данных",
    icon: (
      <PaperIcon>
        <path d="M18 16c0-3 13-3 13 0v13c0 3-13 3-13 0z" fill={SAND} />
        <path d="M18 17.5c1 2.5 12 2.5 13 0" stroke="#fff" />
      </PaperIcon>
    ),
  },
  {
    label: "Системная переменная",
    icon: (
      <PaperIcon>
        <path d="M14.5 21.5h16v9h-16z" fill="#fff" stroke="#7f9cc5" />
        <path d="M14 21h2v10h-2z" fill={BLUE} />
        <text x="23" y="29" fontSize="8" fontWeight="bold" textAnchor="middle" fontFamily="Liberation Sans" fill="#44546a">
          Σ#
        </text>
      </PaperIcon>
    ),
  },
  {
    label: "Итог",
    icon: (
      <PaperIcon>
        <circle cx="22" cy="22.5" r="8.5" fill="#fff" stroke={BLUE} />
        <path d="M26 19.5V18h-7.5l4 4.5-4 4.5H26v-1.5" stroke={BLUE} strokeWidth="1.2" />
      </PaperIcon>
    ),
  },
];

function DialogButton({ children, primary }: { children: ReactNode; primary?: boolean }) {
  return (
    <button
      type="button"
      className={
        "h-[25px] w-[75px] border-black bg-white pl-[2px] " +
        (primary ? "border border-r-2 border-b-2 text-xs" : "border-r-2 border-b-2")
      }
    >
      {children}
    </button>
  );
}

function TextDialog() {
  return (
    <section
      role="dialog"
      aria-label="Текст"
      className="absolute top-[88px] left-[491px] flex h-[495px] w-[645px] flex-col border border-[#6b6b6b] bg-white text-[11px] text-black shadow-[2px_5px_18px_rgba(0,0,0,0.45)]"
    >
      <header className="flex h-[31px] items-center justify-between pr-[9px] pl-2 font-['Open_Sans',sans-serif] text-[11px]">
        <h2>Текст</h2>
        <button type="button" aria-label="Закрыть">
          <Svg w={12} h={12}>
            <path d="M1 1l10 10M11 1L1 11" stroke="#000" />
          </Svg>
        </button>
      </header>
      <div className="flex min-h-0 flex-1">
        <textarea
          aria-label="Выражение"
          className="mt-3 mb-[17px] ml-[13px] w-[236px] resize-none border border-[#6b6b6b]"
        />
        <ul role="tree" className="mt-3 mb-[17px] ml-3 w-[243px] border border-[#6b6b6b]">
          {tree.map((node, i) => (
            <TreeRow key={node.label} node={node} first={i === 0} />
          ))}
        </ul>
        <div className="mb-[3px] ml-[14px] flex flex-1 flex-col border-l border-dotted border-[#aaa] pt-[2px] pr-[5px] pl-[3px]">
          {modes.map((mode) => (
            <button
              key={mode.label}
              type="button"
              className={
                "flex h-[70px] flex-col items-center pt-[9px] text-center leading-3 " +
                (mode.active ? "bg-[#b9d1fd]" : "")
              }
            >
              {mode.icon}
              <span className="flex h-[28px] w-24 items-center justify-center">{mode.label}</span>
            </button>
          ))}
        </div>
      </div>
      <footer className="flex h-[46px] shrink-0 items-start border-t border-dotted border-[#aaa] px-3 pt-[11px]">
        <DialogButton>Проверить</DialogButton>
        <div className="ml-auto flex gap-[6px]">
          <DialogButton primary>OK</DialogButton>
          <DialogButton>Отмена</DialogButton>
        </div>
      </footer>
    </section>
  );
}

function Callout() {
  return (
    <div className="absolute top-[363px] left-[352px] h-[164px] w-[240px] drop-shadow-[2px_4px_3px_rgba(0,0,0,0.45)]">
      <svg width="240" height="164" className="absolute inset-0" aria-hidden="true">
        <path
          d="M10 0H229Q239 1 239 11L237 50Q236 60 227 60H112L30 159 86 60H13Q4 60 2 50L0 10Q0 0 10 0z"
          fill="#ff4343"
        />
      </svg>
      <p className="relative pt-[17px] pr-1 text-center text-[19px] leading-[26px] text-white">Редактируемое поле</p>
    </div>
  );
}

function StatusBar() {
  return (
    <footer className="flex h-[26px] shrink-0 items-center bg-[#2b579a] pt-[3px] pl-1 font-['Open_Sans',sans-serif] text-[11px] whitespace-nowrap text-white">
      <Svg w={4} h={22}>
        <path d="M1.5 1v21" stroke="#c5d2e6" strokeWidth="2" strokeDasharray="2 3" />
      </Svg>
      <span className="ml-[6px] w-[91px]">Сантиметры</span>
      <span className="h-[15px] w-px bg-[#9db3d3]" />
      <button type="button" className="ml-[10px] flex w-[85px] items-center">
        <Svg w={6} h={10}>
          <path d="M0 0l6 5-6 5z" fill="#fff" />
        </Svg>
        <span className="ml-[10px]">Проверить</span>
      </button>
      <span className="h-[15px] w-px bg-[#9db3d3]" />
      <span className="ml-[5px] w-[148px]">Footerданные_Параметр1</span>
      <span className="h-[15px] w-px bg-[#9db3d3]" />
      <span className="ml-[5px]">X:4,80</span>
      <span className="ml-[7px]">Y:0,00</span>
      <span className="ml-[7px]">Ширина:4,80</span>
      <span className="ml-[7px]">Высота:0,80</span>
    </footer>
  );
}

export default function App() {
  return (
    <main className="relative flex h-screen flex-col overflow-hidden border-l-2 border-[#8f8f8f] bg-white font-['Liberation_Sans',Arial,sans-serif] text-black">
      <div className="h-1 shrink-0 border-b border-[#666] bg-[#efefef]" />
      <Toolbars />
      <div className="flex min-h-0 flex-1">
        <Palette />
        <Designer />
        <Properties />
      </div>
      <StatusBar />
      <TextDialog />
      <Callout />
    </main>
  );
}
